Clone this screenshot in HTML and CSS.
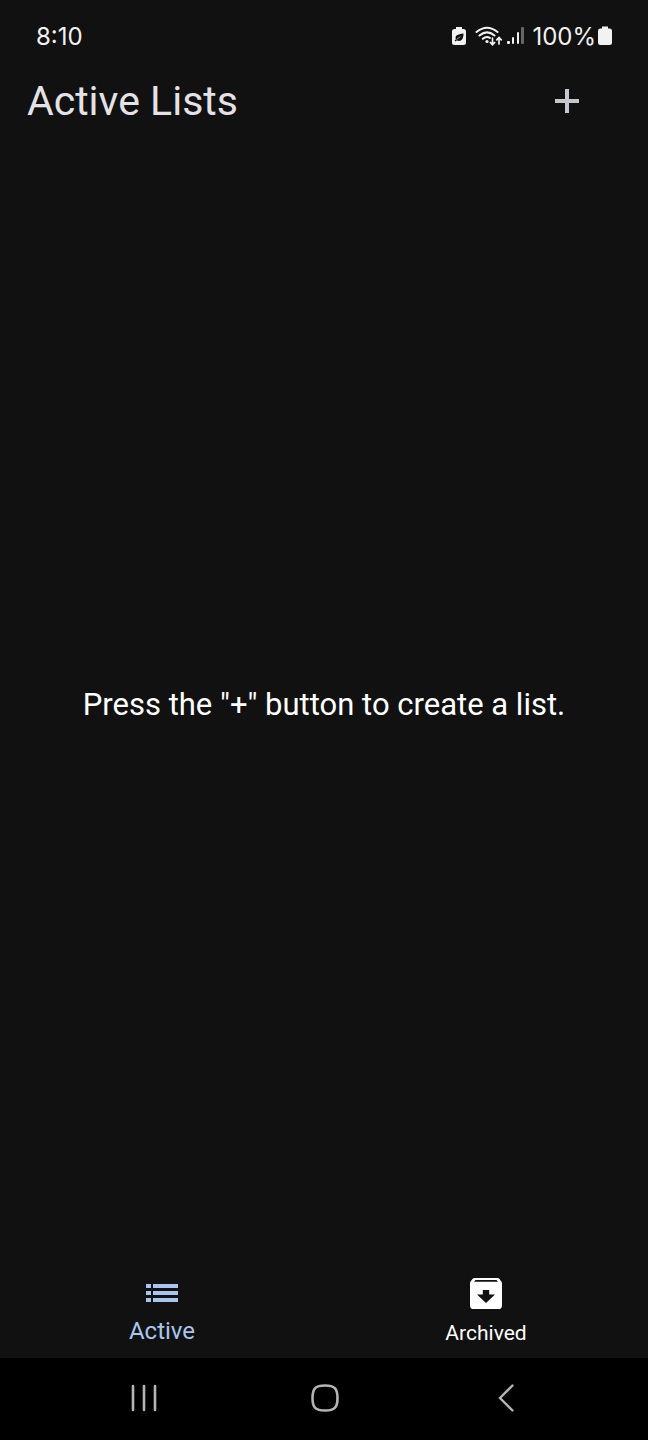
FILE: index.html
```
<!DOCTYPE html>
<html lang="en">
<head>
<meta charset="utf-8">
<meta name="viewport" content="width=device-width, initial-scale=1">
<title>Active Lists</title>
<link rel="stylesheet" href="styles.css">
</head>
<body>
<div class="screen">
  <div class="status-bar">
    <time class="clock">8:10</time>
    <div class="status-icons">
      <svg class="saver" width="16" height="20" viewBox="0 0 16 20" aria-hidden="true">
        <path fill="#f2f2f2" d="M5 1h6v2h1.500Q15 3 15 5.500v11Q15 19 12.500 19h-9Q1 19 1 16.500v-11Q1 3 3.500 3H5z"/>
        <path fill="#111" d="M12.500 7.500C12.500 12 11 15 8 15c-1 0-1.700-.3-2.200-.7L4.600 15.500l-1-1 1.300-1.300C3.500 10 6.500 8 12.500 7.500z"/>
        <path stroke="#f2f2f2" stroke-width=".6" d="M5.500 13.500 9.500 10.500"/>
      </svg>
      <svg class="wifi" width="28" height="20" viewBox="0 0 28 20" fill="none" stroke="#f2f2f2" stroke-width="2" stroke-linecap="round" aria-hidden="true">
        <path d="M1.500 6Q12 -2.500 22.500 6M4.500 9.500Q12 3.200 19.500 9.500M7.800 12.800Q11.500 9.500 15 12"/>
        <circle cx="12" cy="15.500" r="1.600" fill="#f2f2f2" stroke="none"/>
        <path stroke-width="1.700" d="M17.500 12v6.500M15.300 16.500l2.200 2.200 2.200-2.200M24 18v-6M21.700 13.800l2.300-2.300 2.300 2.300"/>
      </svg>
      <svg class="signal" width="18" height="20" viewBox="0 0 18 20" aria-hidden="true">
        <g fill="#f2f2f2"><rect y="15" width="3" height="3" rx="1"/><rect x="5" y="11" width="2" height="7" rx="1"/><rect x="10" y="6" width="2" height="12" rx="1"/></g>
        <rect x="14" y="1" width="3" height="17" rx="1" fill="#666"/>
      </svg>
      <span class="charge">100%</span>
      <svg class="battery" width="14" height="20" viewBox="0 0 14 20" aria-hidden="true">
        <path fill="#f2f2f2" d="M4 .5h6v2h1.500Q14 2.500 14 5v11.500q0 2.500-2.500 2.500h-9Q0 19 0 16.500V5Q0 2.500 2.500 2.500H4z"/>
      </svg>
    </div>
  </div>
  <header class="app-bar">
    <h1 class="title">Active Lists</h1>
    <button class="add" type="button" aria-label="Create a list">
      <svg width="24" height="24" viewBox="0 0 24 24" aria-hidden="true"><path fill="#c6c6d0" d="M10 0h4v10h10v4H14v10h-4V14H0v-4h10z"/></svg>
    </button>
  </header>
  <main class="content">
    <p class="message">Press the "+" button to create a list.</p>
  </main>
  <nav class="tabs" aria-label="Lists">
    <a class="tab tab-current" href="#active" aria-current="page">
      <svg width="32" height="32" viewBox="0 0 32 32" fill="currentColor" aria-hidden="true">
        <path d="M0 6h5v4H0zM0 13h5v4H0zM0 20h5v4H0zM7 6h25v4H7zM7 13h25v4H7zM7 20h25v4H7z"/>
      </svg>
      <span>Active</span>
    </a>
    <a class="tab" href="#archived">
      <svg width="32" height="32" viewBox="0 0 32 32" fill="currentColor" aria-hidden="true">
        <path fill-rule="evenodd" d="M4.500 0h23q1.200 0 2 1l1.700 2.200q.8 1 .8 2.200v22q0 3.600-3.600 3.600H3.600Q0 31 0 27.400V5.400Q0 4.200.8 3.200L2.500 1q.8-1 2-1zM5.500 2 4 3.800h24L26.500 2zM12.800 12v4.500H7L16 25l9-8.500h-5.800V12z"/>
      </svg>
      <span>Archived</span>
    </a>
  </nav>
  <div class="system-nav">
    <button type="button" aria-label="Recent apps">
      <svg width="26" height="28" viewBox="0 0 26 28" fill="none" stroke="#b4b4b4" stroke-width="2.600" stroke-linecap="round" aria-hidden="true"><path d="M2 2v24M13 2v24M24 2v24"/></svg>
    </button>
    <button type="button" aria-label="Home">
      <svg width="28" height="28" viewBox="0 0 28 28" fill="none" stroke="#b4b4b4" stroke-width="2.600" aria-hidden="true"><path d="M14 1.500C23.500 1.500 26.500 4.500 26.500 14S23.500 26.500 14 26.500 1.500 23.500 1.500 14 4.500 1.500 14 1.500z"/></svg>
    </button>
    <button type="button" aria-label="Back">
      <svg width="16" height="28" viewBox="0 0 16 28" fill="none" stroke="#b4b4b4" stroke-width="2.400" stroke-linecap="round" aria-hidden="true"><path d="M14.500 1.500 2 14l12.500 12.500"/></svg>
    </button>
  </div>
</div>
</body>
</html>
```
FILE: styles.css
```
* {
  box-sizing: border-box;
}

body {
  margin: 0;
  background: #111;
  color: #fff;
  font-family: Roboto, "Liberation Sans", sans-serif;
}

button {
  display: flex;
  align-items: center;
  justify-content: center;
  padding: 0;
  border: 0;
  background: none;
}

svg {
  display: block;
}

.screen {
  display: flex;
  flex-direction: column;
  min-height: 100vh;
}

.status-bar {
  display: flex;
  align-items: center;
  justify-content: space-between;
  height: 72px;
  padding: 0 36px;
  color: #f2f2f2;
  font-family: Inter, Roboto, sans-serif;
  font-size: 24px;
}

.status-icons {
  display: flex;
  align-items: center;
}

.saver {
  margin-right: 8px;
}

.wifi {
  margin-right: 4px;
}

.signal {
  margin-right: 7px;
}

.charge {
  margin-right: 2px;
}

.app-bar {
  display: flex;
  align-items: center;
  justify-content: space-between;
  height: 57px;
  padding: 0 57px 0 27px;
}

.title {
  margin: 0;
  color: #e4e2e6;
  font-size: 41px;
  font-weight: 400;
}

.add {
  width: 48px;
  height: 48px;
}

.content {
  display: flex;
  flex: 1;
  align-items: center;
  justify-content: center;
  padding-top: 2px;
}

.message {
  margin: 0;
  font-size: 31px;
  text-align: center;
}

.tabs {
  display: flex;
  height: 80px;
}

.tab {
  display: flex;
  flex: 1;
  flex-direction: column;
  align-items: center;
  gap: 9px;
  color: #fff;
  font-size: 21px;
  line-height: 28px;
  text-decoration: none;
}

.tab-current {
  gap: 7px;
  color: #a9c5ee;
  font-size: 24px;
}

.system-nav {
  display: grid;
  grid-template-columns: repeat(3, 1fr);
  height: 82px;
  padding: 0 51px 3px 53px;
  background: #000;
}
```
